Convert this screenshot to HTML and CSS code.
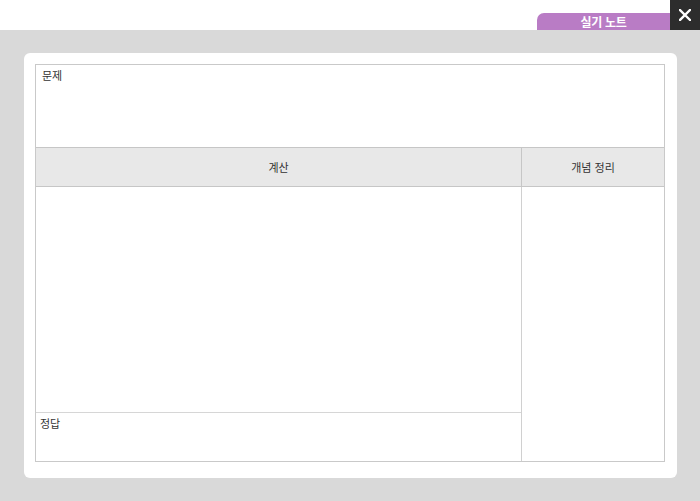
FILE: index.html
```html
<!DOCTYPE html>
<html lang="ko">
<head>
<meta charset="utf-8">
<title>실기 노트</title>
<link rel="stylesheet" href="styles.css">
</head>
<body>
<header class="topbar">
  <div class="tab">실기 노트</div>
  <button class="close" aria-label="닫기">
    <svg width="12" height="12" viewBox="0 0 12 12"><path d="M1 1L11 11M11 1L1 11" stroke="#fff" stroke-width="2.4" stroke-linecap="square"/></svg>
  </button>
</header>
<main class="card">
  <div class="sheet">
    <section class="problem"><span class="label">문제</span></section>
    <div class="heads">
      <div class="head calc-head">계산</div>
      <div class="head concept-head">개념 정리</div>
    </div>
    <div class="body">
      <div class="left">
        <div class="calc"></div>
        <div class="answer"><span class="label">정답</span></div>
      </div>
      <div class="concept"></div>
    </div>
  </div>
</main>
</body>
</html>
```
FILE: styles.css
```css
html, body {
  margin: 0;
  padding: 0;
}
body {
  background: #d9d9d9;
  font-family: "Noto Sans CJK KR", "Noto Sans", sans-serif;
  color: #333;
  width: 700px;
  height: 501px;
  overflow: hidden;
}
.topbar {
  height: 30px;
  background: #fff;
  display: flex;
  justify-content: flex-end;
  align-items: flex-end;
}
.tab {
  width: 133px;
  height: 17px;
  background: #b97cc5;
  border-radius: 7px 0 0 0;
  color: #fff;
  font-size: 12px;
  font-weight: 700;
  line-height: 17px;
  text-align: center;
  letter-spacing: -0.3px;
}
.close {
  width: 30px;
  height: 30px;
  border: 0;
  padding: 0;
  background: #2d2d2d;
  display: flex;
  align-items: center;
  justify-content: center;
}
.card {
  margin: 23px 0 0 24px;
  width: 653px;
  height: 425px;
  box-sizing: border-box;
  background: #fff;
  border-radius: 6px;
  padding: 11px;
}
.sheet {
  width: 630px;
  height: 398px;
  box-sizing: border-box;
  border: 1px solid #c9c9c9;
  display: flex;
  flex-direction: column;
}
.label {
  font-size: 11px;
  line-height: 14px;
  display: block;
}
.problem {
  height: 82px;
  padding: 3px 6px;
  box-sizing: border-box;
}
.heads {
  display: flex;
  height: 40px;
  box-sizing: border-box;
  border-top: 1px solid #c6c6c6;
  border-bottom: 1px solid #c6c6c6;
  background: #e8e8e8;
}
.head {
  font-size: 11px;
  padding-bottom: 1px;
  display: flex;
  align-items: center;
  justify-content: center;
}
.calc-head {
  width: 485px;
  border-right: 1px solid #c6c6c6;
}
.concept-head {
  flex: 1;
}
.body {
  display: flex;
  flex: 1;
}
.left {
  width: 485px;
  border-right: 1px solid #d0d0d0;
  display: flex;
  flex-direction: column;
}
.calc {
  height: 225px;
  border-bottom: 1px solid #d6d6d6;
}
.answer {
  flex: 1;
  padding: 3px 4px;
}
.concept {
  flex: 1;
}
```
